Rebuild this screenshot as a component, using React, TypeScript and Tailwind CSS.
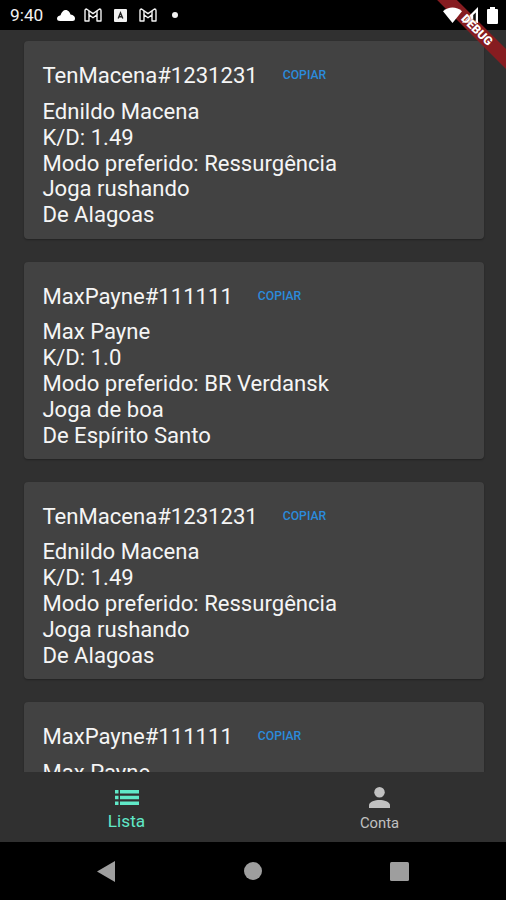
const players = [
  { id: 1, nick: "TenMacena#1231231", name: "Ednildo Macena", kd: "1.49", mode: "Ressurgência", style: "rushando", from: "Alagoas" },
  { id: 2, nick: "MaxPayne#111111", name: "Max Payne", kd: "1.0", mode: "BR Verdansk", style: "de boa", from: "Espírito Santo" },
  { id: 3, nick: "TenMacena#1231231", name: "Ednildo Macena", kd: "1.49", mode: "Ressurgência", style: "rushando", from: "Alagoas" },
  { id: 4, nick: "MaxPayne#111111", name: "Max Payne", kd: "1.0", mode: "BR Verdansk", style: "de boa", from: "Espírito Santo" },
];

type Player = (typeof players)[number];

function MailIcon() {
  return (
    <svg className="h-[14px] w-[18px]" viewBox="0 0 18 14" fill="none" stroke="#f2f2f2" strokeWidth="1.4" strokeLinejoin="round">
      <path d="M1 2.5Q1 1 2.5 1L9 5.6 15.5 1Q17 1 17 2.5V13H13V6.7L9 9.7 5 6.7V13H1Z" />
      <path d="M5 3V6.7M13 3V6.7" />
    </svg>
  );
}

function StatusBar() {
  return (
    <div className="flex h-[30px] shrink-0 items-center justify-between bg-black pl-[10px] pr-2">
      <div className="flex items-center">
        <span className="w-[47px] text-[17.3px] leading-[30px] text-[#f2f2f2]">9:40</span>
        <svg className="h-[11px] w-[18px]" viewBox="0 0 18 11" fill="#fff">
          <path d="M3 11Q0 11 0 8.5C0 6.5 2 5.8 3.5 5.2 4.5 2 6.5 0 8.5 0 11.5 0 13 2.5 13.5 4.5 16.5 5 18 6.5 18 8.5Q18 11 15.5 11Z" />
        </svg>
        <div className="ml-[9px]"><MailIcon /></div>
        <svg className="ml-3 h-[13px] w-[13px]" viewBox="0 0 13 13">
          <rect width="13" height="13" rx="1" fill="#f2f2f2" />
          <path d="M4.2 9.5 6.5 3.8 8.8 9.5M5 7.8H8" fill="none" stroke="#222" strokeWidth="1.4" />
        </svg>
        <div className="ml-3"><MailIcon /></div>
        <span className="ml-[15px] h-[6px] w-[6px] rounded-full bg-[#f2f2f2]" />
      </div>
      <div className="relative z-20 flex items-center">
        <svg className="h-4 w-[19px]" viewBox="0 0 19 16" fill="#fff">
          <path d="M9.5 16 0 4.2C5.5-.8 13.5-.8 19 4.2Z" />
        </svg>
        <svg className="h-4 w-4" viewBox="0 0 16 16">
          <path d="M16 0V16H0Z" fill="#fff" />
          <path d="M13.8 5.5V13.8H11.2V8Z" fill="#111" />
        </svg>
        <svg className="ml-[9px] h-[17px] w-[11px]" viewBox="0 0 11 17" fill="#fff">
          <path d="M3 0H8V2H10Q11 2 11 3V16Q11 17 10 17H1Q0 17 0 16V3Q0 2 1 2H3Z" />
        </svg>
      </div>
    </div>
  );
}

function PlayerCard({ player }: { player: Player }) {
  return (
    <div className="h-[197.4px] shrink-0 rounded-[4px] bg-[#424242] pl-[18.4px] pt-3 shadow-[0_1px_2px_rgba(0,0,0,0.3)]">
      <div className="mb-[1.5px] flex h-11 items-center">
        <h2 className="text-[22.1px] leading-[26px]">{player.nick}</h2>
        <button className="ml-[25px] text-[12.2px] font-medium leading-[14px] text-[#2b8bdb]">COPIAR</button>
      </div>
      <div className="text-[22.1px] leading-[25.9px]">
        <p>{player.name}</p>
        <p>K/D: {player.kd}</p>
        <p>Modo preferido: {player.mode}</p>
        <p>Joga {player.style}</p>
        <p>De {player.from}</p>
      </div>
    </div>
  );
}

function BottomTabs() {
  return (
    <nav className="flex h-[70px] shrink-0 bg-[#303030]">
      <button className="flex flex-1 flex-col items-center pt-[18px] text-[#60e8c7]">
        <svg className="h-[15px] w-[24px]" viewBox="0 0 24 15" fill="currentColor">
          <path d="M0 0H3.5V3.5H0ZM5 0H24V3.5H5ZM0 5.7H3.5V9.2H0ZM5 5.7H24V9.2H5ZM0 11.5H3.5V15H0ZM5 11.5H24V15H5Z" />
        </svg>
        <span className="mt-[6px] text-[17.2px] leading-5">Lista</span>
      </button>
      <button className="flex flex-1 flex-col items-center pt-[15px] text-[#c1c1c1]">
        <svg className="h-[21px] w-[21px]" viewBox="0 0 22 22" fill="currentColor">
          <circle cx="11" cy="5.5" r="5.5" />
          <path d="M0 22V19C0 15.5 6.5 13.5 11 13.5S22 15.5 22 19V22Z" />
        </svg>
        <span className="mt-[5px] text-[14.8px] leading-5">Conta</span>
      </button>
    </nav>
  );
}

function SystemNav() {
  return (
    <div className="flex h-[58px] shrink-0 items-center justify-between bg-black pl-[97px] pr-[97px]">
      <svg className="h-[21px] w-[18px]" viewBox="0 0 18 21" fill="#9e9e9e">
        <path d="M18 0V21L0 10.5Z" />
      </svg>
      <span className="h-[18px] w-[18px] rounded-full bg-[#9e9e9e]" />
      <span className="h-[19px] w-[19px] rounded-[1.5px] bg-[#9e9e9e]" />
    </div>
  );
}

export default function App() {
  return (
    <div className="relative flex h-[900px] w-[506px] flex-col overflow-hidden bg-[#303030] font-['Roboto',sans-serif] text-[#f5f5f5]">
      <StatusBar />
      <main className="flex min-h-0 flex-1 flex-col gap-[23px] overflow-hidden pl-6 pr-[22px] pt-[11.2px]">
        {players.map((p) => (
          <PlayerCard key={p.id} player={p} />
        ))}
      </main>
      <BottomTabs />
      <SystemNav />
      {/* ribbon goes under the status icons, its label over them */}
      <div className="absolute left-[417px] top-[23px] z-10 h-[14px] w-[120px] rotate-45 bg-[#861c20]" />
      <div className="absolute left-[417px] top-[23px] z-30 flex h-[14px] w-[120px] rotate-45 items-center justify-center text-[12px] font-black leading-none text-white [text-shadow:0_0_1px_#861c20,0_0_1px_#861c20]">
        DEBUG
      </div>
    </div>
  );
}
